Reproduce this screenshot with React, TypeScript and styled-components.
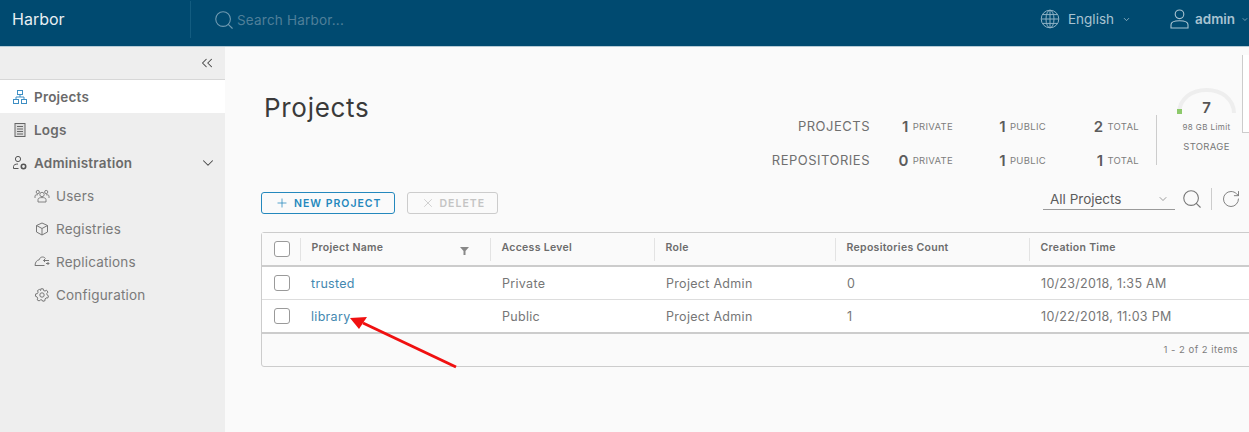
import React from "react";
import styled, { createGlobalStyle } from "styled-components";
import { ChevronDown, ChevronsLeft, Plus, RotateCw, Search, X } from "lucide-react";

const GlobalStyle = createGlobalStyle`
  html, body { margin: 0; padding: 0; }
  body {
    width: 1249px;
    height: 432px;
    overflow: hidden;
    font-family: Inter, "Open Sans", sans-serif;
    color: #565656;
  }
`;

const Page = styled.div`
  position: relative;
  width: 1249px;
  height: 432px;
  display: flex;
  flex-direction: column;
  overflow: hidden;
`;

const Header = styled.header`
  height: 47px;
  flex: none;
  box-sizing: border-box;
  background: #004a70;
  border-bottom: 1px solid #b5cbd6;
  display: flex;
  align-items: center;
  color: #fff;
`;

const Brand = styled.div`
  width: 191px;
  height: 37px;
  box-sizing: border-box;
  padding-left: 12px;
  margin-bottom: 8px;
  border-right: 1px solid #135c80;
  font-size: 16px;
  line-height: 36px;
  color: #e8eff3;
`;

const SearchBar = styled.div`
  display: flex;
  align-items: center;
  gap: 2px;
  margin-left: 22px;
  margin-bottom: 7px;
  font-size: 13.5px;
  letter-spacing: 0.2px;
  color: #4f7f99;
  flex: 1;
`;

const HeaderMenu = styled.div<{ $width: number; $bold?: boolean }>`
  width: ${(p) => p.$width}px;
  flex: none;
  display: flex;
  align-items: center;
  gap: ${(p) => (p.$bold ? 6 : 8)}px;
  margin-bottom: 8px;
  color: #a8c3d1;
  font-size: 13.5px;
  font-weight: ${(p) => (p.$bold ? 600 : 400)};
`;

const Body = styled.div`
  display: flex;
  flex: 1;
  min-height: 0;
`;

const Sidebar = styled.aside`
  width: 225px;
  flex: none;
  background: #eee;
`;

const CollapseRow = styled.div`
  height: 33px;
  box-sizing: border-box;
  border-bottom: 1px solid #d7d7d7;
  display: flex;
  justify-content: flex-end;
  align-items: center;
  padding-right: 9px;
  color: #454545;
`;

const NavItem = styled.div<{ $active?: boolean }>`
  height: 33px;
  padding-left: 12px;
  display: flex;
  align-items: center;
  gap: 6px;
  background: ${(p) => (p.$active ? "#fff" : "transparent")};
  font-size: 13.5px;
  letter-spacing: 0.2px;
  font-weight: 600;
  color: #6a6a6a;
`;

const NavChevron = styled.span`
  margin-left: auto;
  margin-right: 8px;
  display: flex;
  color: #454545;
`;

const SubItem = styled.div`
  height: 33px;
  padding-left: 34px;
  display: flex;
  align-items: center;
  gap: 6px;
  font-size: 13.5px;
  letter-spacing: 0.2px;
  color: #7a7a7a;
`;

const Main = styled.main`
  flex: 1;
  min-width: 0;
  background: #fafafa;
  padding-left: 36px;
`;

const TopRow = styled.div`
  height: 136px;
  display: flex;
  justify-content: space-between;
`;

const Title = styled.h1`
  margin: 44px 0 0 3px;
  font-size: 26px;
  letter-spacing: 0.7px;
  line-height: 34px;
  font-weight: 400;
  color: #3a3a3a;
`;

const Summary = styled.div`
  display: flex;
  padding-top: 62px;
`;

const StatGrid = styled.div`
  display: grid;
  grid-template-columns: 100px 83px 93px 93px;
  grid-auto-rows: 34px;
  height: 68px;
`;

const StatLabel = styled.div`
  font-size: 13px;
  letter-spacing: 0.5px;
  color: #6f6f6f;
  text-align: right;
  line-height: 34px;
  white-space: nowrap;
  direction: rtl;
`;

const StatCell = styled.div`
  display: flex;
  justify-content: flex-end;
  align-items: center;
  gap: 4px;
  font-size: 9.5px;
  letter-spacing: 0.3px;
  color: #7d7d7d;
`;

const StatNumber = styled.span`
  font-size: 15px;
  font-weight: 600;
  color: #5c5c5c;
`;

const StorageBox = styled.div`
  margin-left: 17px;
  margin-right: 12px;
  margin-top: -22px;
  padding-left: 20px;
  width: 61px;
  position: relative;
  &::before {
    content: "";
    position: absolute;
    left: 0;
    top: 28px;
    height: 50px;
    width: 1px;
    background: #ccc;
  }
`;

const Gauge = styled.div`
  position: relative;
  height: 28px;
  width: 61px;
`;

const GaugeValue = styled.div`
  position: absolute;
  left: 0;
  right: 0;
  top: 11px;
  text-align: center;
  font-size: 15px;
  font-weight: 600;
  color: #555;
`;

const StorageLimit = styled.div`
  margin-top: 7px;
  width: 61px;
  text-align: center;
  font-size: 8px;
  letter-spacing: 0.4px;
  line-height: 10px;
  color: #777;
  white-space: nowrap;
`;

const StorageLabel = styled.div`
  margin-top: 9px;
  width: 61px;
  text-align: center;
  font-size: 9.5px;
  letter-spacing: 0.3px;
  line-height: 12px;
  color: #777;
`;

const Toolbar = styled.div`
  height: 40px;
  display: flex;
  align-items: center;
`;

const Button = styled.div<{ $disabled?: boolean }>`
  height: 20px;
  margin-right: 12px;
  padding: 0 12px 0 13px;
  display: flex;
  align-items: center;
  gap: 5px;
  border: 1px solid ${(p) => (p.$disabled ? "#ccc" : "#2488bd")};
  border-radius: 3px;
  font-size: 10.5px;
  font-weight: 600;
  letter-spacing: 1px;
  color: ${(p) => (p.$disabled ? "#c4c4c4" : "#2488bd")};
`;

const FilterArea = styled.div`
  margin-left: auto;
  margin-bottom: 8px;
  display: flex;
  align-items: center;
  padding-right: 8px;
`;

const Select = styled.div`
  width: 132px;
  height: 22px;
  box-sizing: border-box;
  padding: 0 6px 0 7px;
  border-bottom: 1px solid #9a9a9a;
  display: flex;
  align-items: center;
  justify-content: space-between;
  font-size: 13.5px;
  color: #5c5c5c;
`;

const SearchButton = styled.span`
  display: flex;
  margin-left: 6px;
  color: #777;
`;

const ToolDivider = styled.span`
  width: 1px;
  height: 22px;
  margin: 0 9px 0 8px;
  background: #ccc;
`;

const Grid = styled.div`
  margin-top: 9px;
  width: 1000px;
  height: 135px;
  box-sizing: border-box;
  border: 1px solid #ccc;
  border-radius: 3px;
`;

const RowBase = styled.div`
  display: grid;
  grid-template-columns: 38px 190px 164px 181px 194px 1fr;
  align-items: center;
`;

const HeadRow = styled(RowBase)`
  height: 34px;
  box-sizing: border-box;
  background: #fafafa;
  border-bottom: 2px solid #ccc;
  font-size: 10.5px;
  letter-spacing: 0.3px;
  font-weight: 600;
  color: #6c6c6c;
`;

const HeadCell = styled.div`
  height: 23px;
  box-sizing: border-box;
  border-left: 1px solid #e3e3e3;
  padding: 0 0 3px 10.5px;
  display: flex;
  align-items: center;
  position: relative;
`;

const FilterIcon = styled.svg`
  position: absolute;
  right: 21px;
  top: 9px;
`;

const DataRow = styled(RowBase)`
  height: 33px;
  box-sizing: border-box;
  background: #fff;
  border-bottom: 1px solid #ddd;
  font-size: 12.5px;
  letter-spacing: 0.3px;
  color: #767676;
`;

const LastRow = styled(DataRow)`
  height: 34px;
  border-bottom: 2px solid #ccc;
`;

const Cell = styled.div`
  padding-left: 12px;
`;

const NameCell = styled(Cell)`
  padding-left: 11px;
`;

const NameLink = styled.span`
  color: #4488b0;
`;

const CheckCell = styled.div`
  display: flex;
  padding-left: 12px;
`;

const Check = styled.span`
  width: 14px;
  height: 14px;
  border: 1px solid #9a9a9a;
  border-radius: 3px;
  background: #fff;
`;

const Footer = styled.div`
  height: 31px;
  padding-right: 22px;
  display: flex;
  align-items: center;
  justify-content: flex-end;
  font-size: 9.5px;
  letter-spacing: 0.5px;
  color: #7d7d7d;
`;

const Arrow = styled.svg`
  position: absolute;
  left: 345px;
  top: 310px;
`;

// clipped panel showing at the right edge of the screenshot
const EdgePanel = styled.div`
  position: absolute;
  left: 1242px;
  top: 55px;
  width: 7px;
  height: 78px;
  box-sizing: border-box;
  background: #fff;
  border-left: 1px solid #ccc;
  border-bottom: 1px solid #ccc;
`;

const IconSvg = styled.svg`
  flex: none;
`;

function ProjectsIcon() {
  return (
    <IconSvg width="16" height="16" viewBox="0 0 16 16" fill="none" stroke="#3e8fc4" strokeWidth="1">
      <rect x="5.5" y="1.5" width="5" height="4" />
      <rect x="1.5" y="10.5" width="5" height="4" />
      <rect x="9.5" y="10.5" width="5" height="4" />
      <path d="M8 5.5V8M4 10.5V8H12V10.5" />
    </IconSvg>
  );
}

function LogsIcon() {
  return (
    <IconSvg width="16" height="16" viewBox="0 0 16 16" fill="none" stroke="#666" strokeWidth="1">
      <rect x="3" y="1.5" width="10" height="13" fill="#ddd" />
      <path d="M5 4.5H11M5 7H11M5 9.5H11M5 12H11" />
    </IconSvg>
  );
}

function AdminIcon() {
  return (
    <IconSvg width="16" height="16" viewBox="0 0 16 16" fill="none" stroke="#555" strokeWidth="1">
      <circle cx="6" cy="4" r="2.6" />
      <path d="M1.5 13.5V11.5C1.5 9.8 3.5 9 6 9" />
      <path d="M1.5 13.5H6.5" />
      <circle cx="11.5" cy="11.5" r="2.2" strokeWidth="1.6" />
    </IconSvg>
  );
}

function UsersIcon() {
  return (
    <IconSvg width="16" height="16" viewBox="0 0 16 16" fill="none" stroke="#777" strokeWidth="0.9">
      <circle cx="8" cy="6.5" r="2.2" />
      <circle cx="3.8" cy="4" r="1.6" />
      <circle cx="12.2" cy="4" r="1.6" />
      <path d="M4 14V11.5C4 10 6 9.6 8 9.6S12 10 12 11.5V14Z" />
      <path d="M1 10V8C1 7 2.5 6.6 4 6.8M15 10V8C15 7 13.5 6.6 12 6.8" />
    </IconSvg>
  );
}

function BoxIcon() {
  return (
    <IconSvg width="16" height="16" viewBox="0 0 16 16" fill="none" stroke="#777" strokeWidth="1">
      <path d="M8 2L13.5 4.5V11L8 14L2.5 11V4.5Z" />
      <path d="M2.5 4.5L8 7.5L13.5 4.5M8 7.5V14" />
    </IconSvg>
  );
}

function CloudIcon() {
  return (
    <IconSvg width="16" height="16" viewBox="0 0 16 16" fill="none" stroke="#777" strokeWidth="1">
      <path d="M11.5 4.6C10.7 3.4 9.6 3 8.6 3C6.8 3 5.5 4.2 5.2 5.8C3.2 6 1.2 7.8 1 11.5H10.5" />
      <path d="M15 6.5H9.5M11 5L9.5 6.5L11 8M15 9.5H12M13.5 8L15 9.5L13.5 11" />
    </IconSvg>
  );
}

function GearIcon() {
  return (
    <IconSvg width="16" height="16" viewBox="0 0 16 16" fill="none" stroke="#777" strokeWidth="1">
      <circle cx="8" cy="8" r="2.2" />
      <path d="M6.8 1.8H9.2L9.6 3.5L11 4.1L12.5 3.2L14 5.1L12.8 6.4L13 7.9L14.5 8.8L13.8 11L12 10.9L11 12L11 13.7L8.8 14.3L7.9 12.9L6.4 12.8L5.2 14L3.2 12.9L3.7 11.2L3 9.9L1.4 9.2L1.7 6.9L3.4 6.6L4.1 5.2L3.5 3.6L5.4 2.4L6.6 3.5Z" />
    </IconSvg>
  );
}

function GlobeIcon() {
  return (
    <IconSvg width="20" height="20" viewBox="0 0 20 20" fill="none" stroke="#8fb2c5" strokeWidth="1">
      <circle cx="10" cy="10" r="8.8" />
      <ellipse cx="10" cy="10" rx="4" ry="8.8" />
      <path d="M10 1.2V18.8M1.2 10H18.8M2.6 5.6H17.4M2.6 14.4H17.4" />
    </IconSvg>
  );
}

function UserIcon() {
  return (
    <IconSvg width="19" height="20" viewBox="0 0 19 20" fill="none" stroke="#a8c3d1" strokeWidth="1.1">
      <circle cx="9.5" cy="5.3" r="4.3" />
      <path d="M1 19V15.8C1 13 5.5 11.8 9.5 11.8S18 13 18 15.8V19Z" />
    </IconSvg>
  );
}

function GaugeArc() {
  return (
    <svg width="61" height="28" viewBox="0 0 61 28" fill="none">
      <path d="M3 26C3.5 12 15 3 30.5 3S57.5 12 58 26" stroke="#eee" strokeWidth="4" />
      <rect x="1" y="22" width="5" height="5" fill="#8dc96b" />
    </svg>
  );
}

const rows = [
  { name: "trusted", access: "Private", count: "0", time: "10/23/2018, 1:35 AM" },
  { name: "library", access: "Public", count: "1", time: "10/22/2018, 11:03 PM" },
];

const stats = [
  { label: "PROJECTS", values: ["1", "1", "2"] },
  { label: "REPOSITORIES", values: ["0", "1", "1"] },
];
const statNames = ["PRIVATE", "PUBLIC", "TOTAL"];

export default function App() {
  return (
    <Page>
      <GlobalStyle />
      <Header>
        <Brand>Harbor</Brand>
        <SearchBar>
          <Search size={22} strokeWidth={1.2} color="#6f9ab1" />
          Search Harbor...
        </SearchBar>
        <HeaderMenu $width={130}>
          <GlobeIcon />
          English
          <ChevronDown size={9} />
        </HeaderMenu>
        <HeaderMenu $width={79} $bold>
          <UserIcon />
          admin
          <ChevronDown size={9} />
        </HeaderMenu>
      </Header>
      <Body>
        <Sidebar>
          <CollapseRow>
            <ChevronsLeft size={18} strokeWidth={1.4} />
          </CollapseRow>
          <NavItem $active>
            <ProjectsIcon />
            Projects
          </NavItem>
          <NavItem>
            <LogsIcon />
            Logs
          </NavItem>
          <NavItem>
            <AdminIcon />
            Administration
            <NavChevron>
              <ChevronDown size={18} strokeWidth={1.4} />
            </NavChevron>
          </NavItem>
          <SubItem>
            <UsersIcon />
            Users
          </SubItem>
          <SubItem>
            <BoxIcon />
            Registries
          </SubItem>
          <SubItem>
            <CloudIcon />
            Replications
          </SubItem>
          <SubItem>
            <GearIcon />
            Configuration
          </SubItem>
        </Sidebar>
        <Main>
          <TopRow>
            <Title>Projects</Title>
            <Summary>
              <StatGrid>
                {stats.map((s) => (
                  <React.Fragment key={s.label}>
                    <StatLabel>{s.label}</StatLabel>
                    {s.values.map((v, i) => (
                      <StatCell key={statNames[i]}>
                        <StatNumber>{v}</StatNumber>
                        {statNames[i]}
                      </StatCell>
                    ))}
                  </React.Fragment>
                ))}
              </StatGrid>
              <StorageBox>
                <Gauge>
                  <GaugeArc />
                  <GaugeValue>7</GaugeValue>
                </Gauge>
                <StorageLimit>98 GB Limit</StorageLimit>
                <StorageLabel>STORAGE</StorageLabel>
              </StorageBox>
            </Summary>
          </TopRow>
          <Toolbar>
            <Button>
              <Plus size={14} strokeWidth={1.3} />
              NEW PROJECT
            </Button>
            <Button $disabled>
              <X size={14} strokeWidth={1.3} />
              DELETE
            </Button>
            <FilterArea>
              <Select>
                All Projects
                <ChevronDown size={12} strokeWidth={1.2} />
              </Select>
              <SearchButton>
                <Search size={22} strokeWidth={1.2} />
              </SearchButton>
              <ToolDivider />
              <RotateCw size={20} strokeWidth={1.1} color="#777" />
            </FilterArea>
          </Toolbar>
          <Grid>
            <HeadRow>
              <CheckCell>
                <Check />
              </CheckCell>
              <HeadCell>
                Project Name
                <FilterIcon width="9" height="8" viewBox="0 0 9 8">
                  <path d="M0 0H9L5.5 4V8H3.5V4Z" fill="#888" />
                </FilterIcon>
              </HeadCell>
              <HeadCell>Access Level</HeadCell>
              <HeadCell>Role</HeadCell>
              <HeadCell>Repositories Count</HeadCell>
              <HeadCell>Creation Time</HeadCell>
            </HeadRow>
            {rows.map((r, i) => {
              const Row = i === rows.length - 1 ? LastRow : DataRow;
              return (
                <Row key={r.name}>
                  <CheckCell>
                    <Check />
                  </CheckCell>
                  <NameCell>
                    <NameLink>{r.name}</NameLink>
                  </NameCell>
                  <Cell>{r.access}</Cell>
                  <Cell>Project Admin</Cell>
                  <Cell>{r.count}</Cell>
                  <Cell>{r.time}</Cell>
                </Row>
              );
            })}
            <Footer>1 - 2 of 2 items</Footer>
          </Grid>
        </Main>
      </Body>
      <EdgePanel />
      <Arrow width="120" height="65" viewBox="0 0 120 65">
        <path d="M111 57L18 13" stroke="#f01010" strokeWidth="3" fill="none" />
        <path d="M5 8L22 7L14 19Z" fill="#f01010" />
      </Arrow>
    </Page>
  );
}
